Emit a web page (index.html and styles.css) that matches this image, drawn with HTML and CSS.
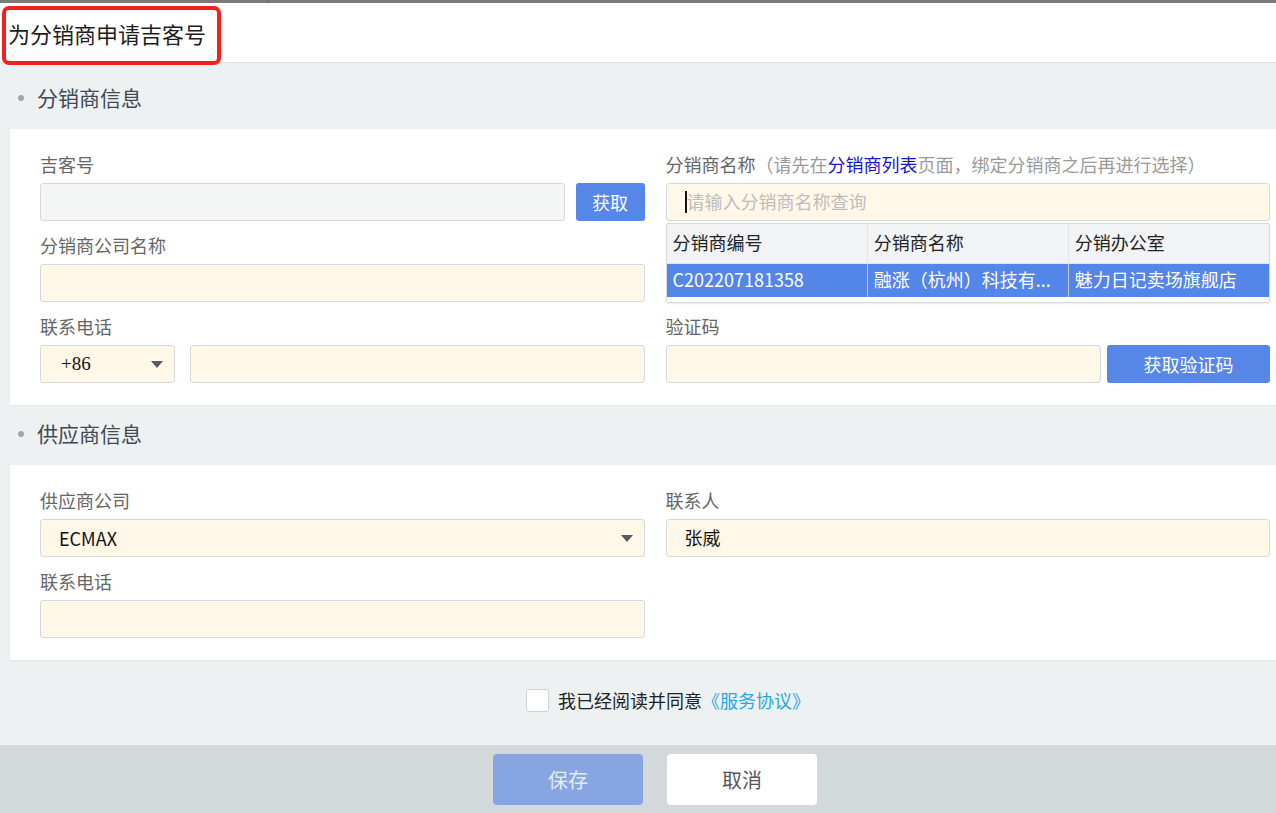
FILE: index.html
```html
<!DOCTYPE html>
<html lang="zh-CN">
<head>
    <meta charset="UTF-8">
    <title>为分销商申请吉客号</title>
    <link rel="stylesheet" href="styles.css">
</head>
<body>
<div class="page">
    <div class="topline"><span class="topline-sep"></span></div>
    <div class="titlebar">
        <h1 class="title">为分销商申请吉客号</h1>
        <div class="mark"></div>
    </div>

    <div class="section-head first"><span class="dot"></span>分销商信息</div>
    <div class="panel">
        <div class="grid">
            <div class="field">
                <label class="label">吉客号</label>
                <div class="row">
                    <input class="input disabled" disabled>
                    <button class="btn btn-fetch">获取</button>
                </div>
            </div>
            <div class="field">
                <label class="label">分销商名称<span class="hint">（请先在<a class="link-blue">分销商列表</a>页面，绑定分销商之后再进行选择）</span></label>
                <div class="search-wrap">
                    <div class="input search"><span class="caret"></span><span class="placeholder">请输入分销商名称查询</span></div>
                    <div class="dropdown">
                        <table class="dd-table">
                            <thead>
                            <tr>
                                <th>分销商编号</th>
                                <th>分销商名称</th>
                                <th>分销办公室</th>
                            </tr>
                            </thead>
                            <tbody>
                            <tr class="selected">
                                <td>C202207181358</td>
                                <td>融涨（杭州）科技有...</td>
                                <td>魅力日记卖场旗舰店</td>
                            </tr>
                            </tbody>
                        </table>
                    </div>
                </div>
            </div>
            <div class="field">
                <label class="label">分销商公司名称</label>
                <input class="input">
            </div>
            <div class="field"></div>
            <div class="field">
                <label class="label">联系电话</label>
                <div class="row">
                    <div class="select select-code"><span class="serif">+86</span><span class="arrow"></span></div>
                    <input class="input phone">
                </div>
            </div>
            <div class="field">
                <label class="label">验证码</label>
                <div class="row">
                    <input class="input">
                    <button class="btn btn-code">获取验证码</button>
                </div>
            </div>
        </div>
    </div>

    <div class="section-head"><span class="dot"></span>供应商信息</div>
    <div class="panel">
        <div class="grid">
            <div class="field">
                <label class="label">供应商公司</label>
                <div class="select"><span>ECMAX</span><span class="arrow"></span></div>
            </div>
            <div class="field">
                <label class="label">联系人</label>
                <div class="input filled">张威</div>
            </div>
            <div class="field">
                <label class="label">联系电话</label>
                <input class="input">
            </div>
            <div class="field"></div>
        </div>
    </div>

    <div class="agree">
        <span class="checkbox"></span>
        <span>我已经阅读并同意<a class="link-light">《服务协议》</a></span>
    </div>

    <div class="footer">
        <button class="btn-foot save">保存</button>
        <button class="btn-foot cancel">取消</button>
    </div>
</div>
</body>
</html>
```

FILE: styles.css
```css
html, body {
    margin: 0;
    padding: 0;
    overflow: hidden;
}
body {
    font-family: "Noto Sans CJK SC", "Liberation Sans", sans-serif;
    background-color: #edf1f2;
}
.page {
    width: 1310px;
    min-height: 813px;
    display: flex;
    flex-direction: column;
}
.topline {
    height: 3px;
    background-color: #7b7b7b;
    position: relative;
}
.topline-sep {
    position: absolute;
    left: 268px;
    top: 0;
    width: 1px;
    height: 3px;
    background-color: #5e5e5e;
}
.titlebar {
    position: relative;
    height: 59px;
    background-color: #fff;
    border-bottom: 1px solid #dde2e3;
    display: flex;
    align-items: center;
}
.title {
    margin: 0 0 0 8px;
    font-size: 22px;
    font-weight: normal;
    color: #1d1d1d;
    line-height: 30px;
}
.mark {
    position: absolute;
    left: 2px;
    top: 3px;
    width: 211px;
    height: 51px;
    border: 4px solid #f5201c;
    border-radius: 7px;
    z-index: 2;
}
.section-head {
    height: 60px;
    line-height: 56px;
    font-size: 21px;
    color: #3e4954;
    padding-left: 37px;
    position: relative;
}
.section-head.first {
    margin-top: 6px;
}
.dot {
    position: absolute;
    left: 18px;
    top: 26px;
    width: 6px;
    height: 6px;
    border-radius: 50%;
    background-color: #9ea6ab;
}
.panel {
    margin: 0 10px;
    padding: 24px 30px 22px;
    background-color: #fff;
    box-shadow: 0 1px 2px rgba(0, 0, 0, 0.05);
}
.grid {
    display: grid;
    grid-template-columns: 1fr 1fr;
    column-gap: 21px;
    row-gap: 13px;
}
.label {
    display: block;
    font-size: 18px;
    line-height: 22px;
    height: 24px;
    color: #666;
    margin-bottom: 6px;
    white-space: nowrap;
}
.hint {
    color: #9a9a9a;
}
.link-blue {
    color: #1414d4;
}
.row {
    display: flex;
    gap: 11px;
}
.input {
    box-sizing: border-box;
    display: block;
    width: 100%;
    height: 38px;
    margin: 0;
    border: 1px solid #d3dadb;
    border-radius: 3px;
    background-color: #fff7e8;
    font-family: inherit;
    font-size: 18px;
    padding: 0 18px;
}
.input.disabled {
    background-color: #f4f6f6;
}
.input.filled {
    line-height: 35px;
    color: #111;
}
.row .input {
    flex: 1;
}
.row .phone {
    margin-left: 4px;
}
.btn {
    height: 38px;
    border: none;
    border-radius: 3px;
    background-color: #5686e8;
    color: #fff;
    font-family: inherit;
    font-size: 18px;
    padding: 0;
}
.btn-fetch {
    width: 69px;
}
.btn-code {
    width: 163px;
    margin-left: -5px;
}
.search-wrap {
    position: relative;
}
.search {
    display: flex;
    align-items: center;
    padding-left: 18px;
}
.caret {
    width: 2px;
    height: 22px;
    background-color: #111;
}
.placeholder {
    color: #bdbdbd;
    font-size: 18px;
    margin-top: -2px;
}
.dropdown {
    position: absolute;
    left: 0;
    right: 0;
    top: 40px;
    background-color: #fff;
    border: 1px solid #d6dbdc;
    border-radius: 2px;
    padding-bottom: 5px;
    box-shadow: 0 1px 2px rgba(0, 0, 0, 0.08);
}
.dd-table {
    width: 100%;
    border-collapse: collapse;
    table-layout: fixed;
    font-size: 18px;
    line-height: 22px;
}
.dd-table th {
    height: 36px;
    background-color: #f1f3f5;
    font-weight: normal;
    color: #222;
    text-align: left;
    padding: 0 6px 3px;
    border-right: 1px solid #e1e5e7;
    border-bottom: 1px solid #e1e5e7;
}
.dd-table td {
    height: 30px;
    padding: 0 6px 3px;
    border-right: 1px solid #b9cdf5;
    white-space: nowrap;
    overflow: hidden;
}
.dd-table th:last-child, .dd-table td:last-child {
    border-right: none;
}
.dd-table tr.selected {
    background-color: #5485e8;
    color: #fff;
}
.select {
    box-sizing: border-box;
    height: 38px;
    border: 1px solid #d3dadb;
    border-radius: 3px;
    background-color: #fff7e8;
    display: flex;
    align-items: center;
    justify-content: space-between;
    padding: 0 11px 0 18px;
    font-size: 18px;
    color: #111;
}
.select-code {
    width: 135px;
    flex: none;
    padding-left: 20px;
}
.serif {
    font-family: "Liberation Serif", serif;
    font-size: 19px;
}
.arrow {
    width: 0;
    height: 0;
    border-left: 6px solid transparent;
    border-right: 6px solid transparent;
    border-top: 7px solid #555b60;
}
.agree {
    height: 80px;
    padding: 0 0 5px 26px;
    display: flex;
    align-items: center;
    justify-content: center;
    gap: 9px;
    font-size: 18px;
    color: #222;
}
.checkbox {
    box-sizing: border-box;
    width: 23px;
    height: 23px;
    background-color: #fff;
    border: 1px solid #cdd3d6;
    border-radius: 3px;
}
.link-light {
    color: #2aa7e0;
}
.footer {
    flex: 1;
    background-color: #d3d8db;
    display: flex;
    justify-content: center;
    align-items: flex-start;
    gap: 24px;
    padding-top: 9px;
}
.btn-foot {
    width: 150px;
    height: 51px;
    border: none;
    border-radius: 4px;
    font-family: inherit;
    font-size: 20px;
}
.save {
    background-color: #87a6e1;
    color: #e3eaf8;
}
.cancel {
    background-color: #fff;
    color: #555;
}
```
